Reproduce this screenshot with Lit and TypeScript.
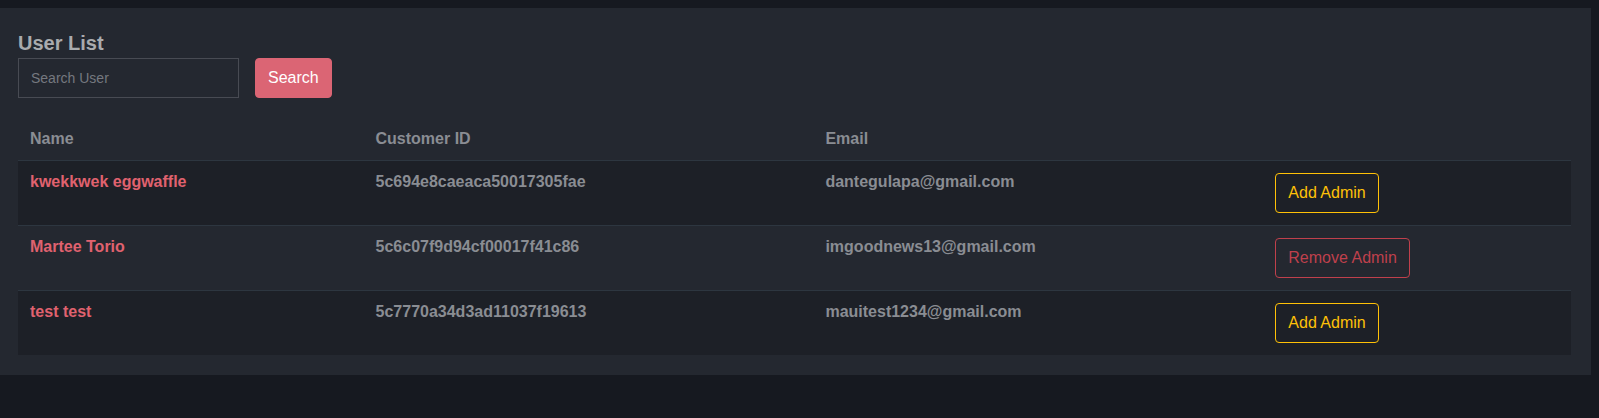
import { LitElement, html, css } from "lit";
import { customElement, state } from "lit/decorators.js";
import { classMap } from "lit/directives/class-map.js";

interface User {
  id: string;
  name: string;
  email: string;
  admin: boolean;
}

@customElement("app-root")
export class AppRoot extends LitElement {
  static styles = css`
    :host {
      display: block;
      box-sizing: border-box;
      min-height: 100vh;
      padding: 8px 8px 40px 0;
      background: #161920;
      color: #8a8d93;
      font: 16px/18px "Liberation Sans", Arial, sans-serif;
    }
    *, *::before, *::after {
      box-sizing: border-box;
    }
    .panel {
      padding: 24px 20px 20px 18px;
      background: #242830;
    }
    .title {
      margin: 0 0 4px;
      color: #a9abae;
      font-size: 20px;
      line-height: 22px;
      font-weight: 700;
    }
    .search {
      display: flex;
      gap: 16px;
      margin-bottom: 19px;
    }
    .field {
      width: 221px;
      height: 40px;
      margin: 0;
      padding: 0 12px;
      border: 1px solid #484b53;
      border-radius: 0;
      background: transparent;
      color: #a9abae;
      font: inherit;
      font-size: 14px;
    }
    .field::placeholder {
      color: #75787f;
      opacity: 1;
    }
    .btn {
      display: block;
      height: 40px;
      margin: 0;
      padding: 0 12px;
      border: 1px solid;
      border-radius: 4px;
      background: transparent;
      font: inherit;
      font-weight: 400;
      cursor: pointer;
    }
    .primary {
      border-color: #db6574;
      background: #db6574;
      color: #fff;
    }
    .add {
      color: #ffc107;
    }
    .remove {
      color: #bf404c;
    }
    .users {
      width: 100%;
      border-collapse: separate;
      border-spacing: 0;
      table-layout: fixed;
      text-align: left;
      font-weight: 700;
    }
    .users th,
    .users td {
      padding: 12px;
      vertical-align: top;
    }
    .users thead th {
      padding-top: 13px;
    }
    .users tbody th,
    .users tbody td {
      border-top: 1px solid #2d3640;
    }
    .users tbody tr:nth-child(odd) {
      background: #1d2027;
    }
    .c-name {
      width: 22.25%;
    }
    .c-wide {
      width: 28.97%;
    }
    .link {
      color: #e0626f;
      text-decoration: none;
    }
  `;

  @state() private users: User[] = [
    { id: "5c694e8caeaca50017305fae", name: "kwekkwek eggwaffle", email: "dantegulapa@gmail.com", admin: false },
    { id: "5c6c07f9d94cf00017f41c86", name: "Martee Torio", email: "imgoodnews13@gmail.com", admin: true },
    { id: "5c7770a34d3ad11037f19613", name: "test test", email: "mauitest1234@gmail.com", admin: false },
  ];

  @state() private query = "";

  private toggle(id: string) {
    this.users = this.users.map((u) => (u.id === id ? { ...u, admin: !u.admin } : u));
  }

  private search(e: Event) {
    e.preventDefault();
    const field = this.renderRoot.querySelector<HTMLInputElement>("#user-search");
    this.query = (field?.value ?? "").trim().toLowerCase();
  }

  render() {
    const shown = this.users.filter((u) => u.name.toLowerCase().includes(this.query));
    return html`
      <main class="panel">
        <h1 class="title"><label for="user-search">User List</label></h1>
        <form class="search" @submit=${this.search}>
          <input class="field" id="user-search" type="text" placeholder="Search User" />
          <button class="btn primary" type="submit">Search</button>
        </form>
        <table class="users">
          <colgroup>
            <col class="c-name" />
            <col class="c-wide" />
            <col class="c-wide" />
            <col />
          </colgroup>
          <thead>
            <tr>
              <th scope="col">Name</th>
              <th scope="col">Customer ID</th>
              <th scope="col">Email</th>
              <td></td>
            </tr>
          </thead>
          <tbody>
            ${shown.map(
              (u) => html`
                <tr>
                  <th scope="row"><a class="link" href="#${u.id}">${u.name}</a></th>
                  <td>${u.id}</td>
                  <td>${u.email}</td>
                  <td>
                    <button
                      type="button"
                      class=${classMap({ btn: true, add: !u.admin, remove: u.admin })}
                      @click=${() => this.toggle(u.id)}
                    >${u.admin ? "Remove Admin" : "Add Admin"}</button>
                  </td>
                </tr>
              `
            )}
          </tbody>
        </table>
      </main>
    `;
  }
}
